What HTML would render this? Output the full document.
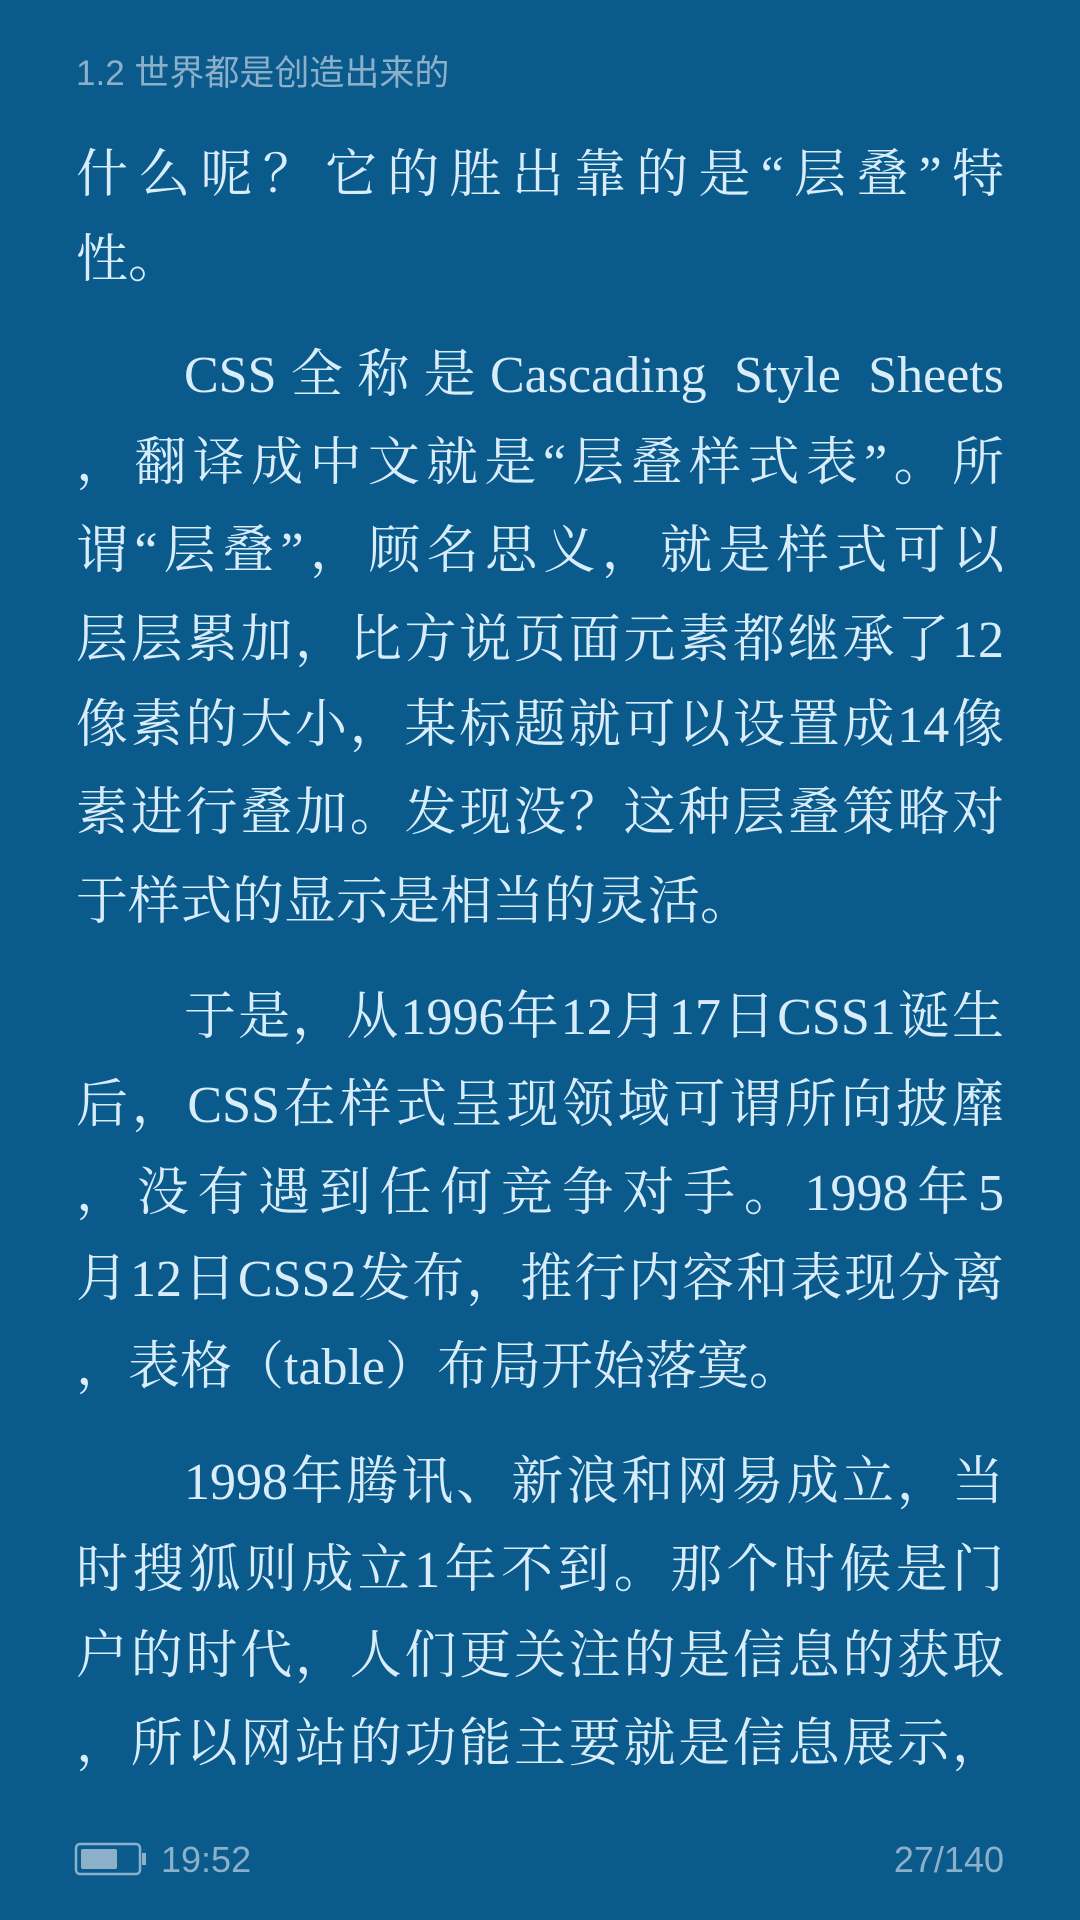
<!DOCTYPE html>
<html><head><meta charset="utf-8"><style>
html,body{margin:0;padding:0;}
body{width:1080px;height:1920px;background:#0a5a8c;position:relative;overflow:hidden;}
.h{position:absolute;left:76px;top:52px;font:35px/44px "Liberation Sans","Noto Sans CJK SC",sans-serif;color:#8cb0ca;}
.l{position:absolute;left:76px;width:928px;height:88px;line-height:88px;font-family:"Liberation Serif","Noto Serif CJK SC",serif;font-size:52px;color:#d8ecfa;white-space:nowrap;text-align:justify;text-align-last:justify;text-justify:inter-character;}
.l.e{text-align-last:left;}
.l.i{left:184px;width:820px;}
.f{position:absolute;top:1838px;font:36px/44px "Liberation Sans",sans-serif;color:#8cb0ca;}
</style></head><body>
<div class="h">1.2 世界都是创造出来的</div>
<div class="l" style="top:132px">什么呢？它的胜出靠的是“层叠”特</div>
<div class="l e" style="top:217px">性。</div>
<div class="l i" style="top:332px">CSS全称是Cascading Style Sheets</div>
<div class="l" style="top:420px">，翻译成中文就是“层叠样式表”。所</div>
<div class="l" style="top:508px">谓“层叠”，顾名思义，就是样式可以</div>
<div class="l" style="top:597px">层层累加，比方说页面元素都继承了12</div>
<div class="l" style="top:682px">像素的大小，某标题就可以设置成14像</div>
<div class="l" style="top:770px">素进行叠加。发现没？这种层叠策略对</div>
<div class="l e" style="top:859px">于样式的显示是相当的灵活。</div>
<div class="l i" style="top:974px">于是，从1996年12月17日CSS1诞生</div>
<div class="l" style="top:1062px">后，CSS在样式呈现领域可谓所向披靡</div>
<div class="l" style="top:1150px">，没有遇到任何竞争对手。1998年5</div>
<div class="l" style="top:1236px">月12日CSS2发布，推行内容和表现分离</div>
<div class="l e" style="top:1324px">，表格（table）布局开始落寞。</div>
<div class="l i" style="top:1439px">1998年腾讯、新浪和网易成立，当</div>
<div class="l" style="top:1527px">时搜狐则成立1年不到。那个时候是门</div>
<div class="l" style="top:1613px">户的时代，人们更关注的是信息的获取</div>
<div class="l" style="top:1701px">，所以网站的功能主要就是信息展示，</div>
<svg style="position:absolute;left:74px;top:1842px" width="74" height="34" viewBox="0 0 74 34">
<rect x="2" y="2" width="64" height="30" rx="4" fill="none" stroke="#8cb0ca" stroke-width="2.5"/>
<rect x="68" y="11" width="4" height="12" fill="#8cb0ca"/>
<rect x="7" y="7" width="36" height="20" rx="2" fill="#8cb0ca"/>
</svg>
<div class="f" style="left:161px">19:52</div>
<div class="f" style="right:76px">27/140</div>
</body></html>
